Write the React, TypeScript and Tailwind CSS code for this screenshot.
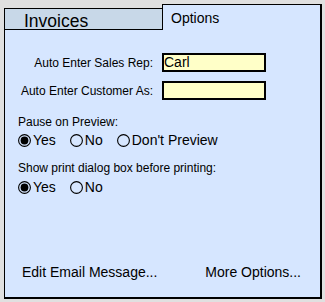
import React from 'react';

const font = { fontFamily: '"Liberation Sans", Arial, sans-serif' };

function Radio({ label, checked }: { label: string; checked?: boolean }) {
  return (
    <div className="flex items-center gap-[2px] h-[16px]">
      <svg width="13" height="13" viewBox="0 0 13 13">
        <circle cx="6.5" cy="6.5" r="5.9" fill="none" stroke="#000" strokeWidth="1.1" />
        {checked && <circle cx="6.5" cy="6.5" r="3.9" fill="#000" />}
      </svg>
      <span className="text-[14px] leading-[16px] text-black">{label}</span>
    </div>
  );
}

export default function App() {
  return (
    <div className="w-[325px] h-[302px] bg-[#e0e0e0] pt-[4px] pl-[4px]" style={font}>
      <div className="w-[318px] flex flex-col">
        {/* tabs */}
        <div className="flex h-[26px]">
          <div className="w-[158px] h-[22px] mt-[4px] bg-[#c8d8e8] border-l border-t border-b border-black pl-[19px] pt-[2px] text-[17.5px] leading-[20px] text-black">
            Invoices
          </div>
          <div className="flex-1 bg-[#d6e6ff] border-l border-t border-r-2 border-black pl-[8px] pt-[5px] text-[14px] leading-[16px] text-black">
            Options
          </div>
        </div>

        {/* body */}
        <div className="h-[269px] bg-[#d6e6ff] border-l border-r-2 border-b-2 border-black flex flex-col">
          <div className="flex items-center mt-[23px]">
            <div className="w-[148px] text-right text-[12px] leading-[14px] text-black">Auto Enter Sales Rep:</div>
            <div className="ml-[9px] w-[104px] h-[19px] bg-[#ffffc8] border-2 border-black text-[14px] leading-[15px] text-black">
              Carl
            </div>
          </div>
          <div className="flex items-center mt-[9px]">
            <div className="w-[148px] text-right text-[12px] leading-[14px] text-black">Auto Enter Customer As:</div>
            <div className="ml-[9px] w-[104px] h-[19px] bg-[#ffffc8] border-2 border-black" />
          </div>

          <div className="pl-[13px] mt-[15px] flex flex-col">
            <div className="text-[12px] leading-[14px] text-black">Pause on Preview:</div>
            <div className="flex gap-[14px] mt-[3px]">
              <Radio label="Yes" checked />
              <Radio label="No" />
              <Radio label="Don't Preview" />
            </div>
            <div className="text-[12px] leading-[14px] text-black mt-[13px]">Show print dialog box before printing:</div>
            <div className="flex gap-[14px] mt-[4px]">
              <Radio label="Yes" checked />
              <Radio label="No" />
            </div>
          </div>

          <div className="mt-auto pb-[17px] pl-[17px] pr-[19px] flex justify-between text-[14px] leading-[16px] text-black">
            <span>Edit Email Message...</span>
            <span>More Options...</span>
          </div>
        </div>
      </div>
    </div>
  );
}
